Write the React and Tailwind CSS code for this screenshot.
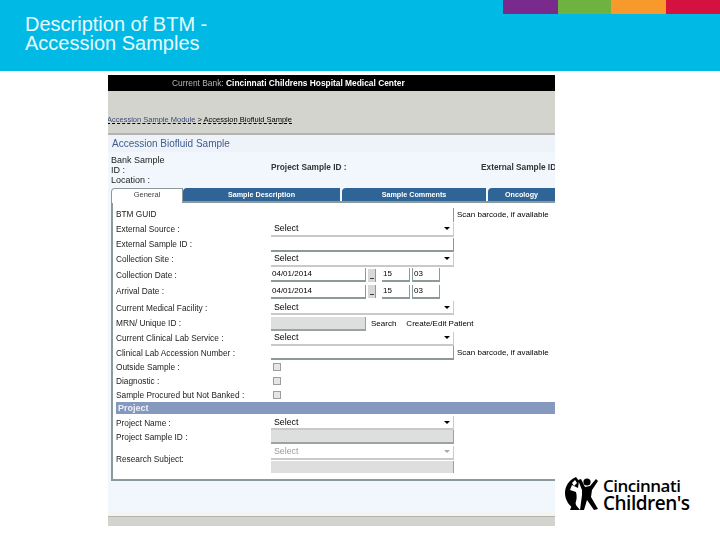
const Select = ({ disabled }) => (
  <div className={`flex h-[14px] w-[183px] items-center justify-between border-r border-b-2 border-[#c9c9c9] bg-white pl-[3px] pr-[3px] text-[8.8px] ${disabled ? "text-[#9a9a9a]" : ""}`}>
    <span>Select</span>
    <span className={`h-0 w-0 border-x-[3px] border-t-[3px] border-x-transparent ${disabled ? "border-t-[#aaaaaa]" : "border-t-black"}`} />
  </div>
);

const TextBox = ({ className = "w-[183px]", children }) => (
  <div className={`flex h-[14px] items-center border-r border-b-2 border-[#8c9a9c] bg-white pl-px text-[8px] ${className}`}>{children}</div>
);

const GreyBox = ({ className = "w-[183px]" }) => (
  <div className={`h-[14px] border-r border-b-2 border-[#9aa3a3] bg-[#dedede] ${className}`} />
);

const Check = () => <div className="ml-[2px] h-[8px] w-[8px] border border-[#9d9d9d] bg-[#e6e6e6]" />;

const Row = ({ label, h = "h-[15px]", children }) => (
  <div className={`grid grid-cols-[155px_1fr] items-center ${h}`}>
    <span className="whitespace-nowrap text-[8.3px] text-[#222222]">{label}</span>
    <div className="flex items-center">{children}</div>
  </div>
);

const DateFields = ({ date }) => (
  <>
    <TextBox className="w-[95px]">{date}</TextBox>
    <div className="ml-[2px] flex h-[13px] w-[8px] items-end justify-center overflow-hidden border-r border-[#8c9a9c] bg-[#d8d8d8] pb-[2px] text-[8px] font-bold leading-[6px] tracking-[-1px] text-black">...</div>
    <TextBox className="ml-[6px] w-[28px] pl-[1px]">15</TextBox>
    <TextBox className="ml-[2px] w-[28px] border-l">03</TextBox>
  </>
);

const Tab = ({ className, children }) => (
  <div className={`flex h-[13px] items-center justify-center rounded-tl-[4px] bg-[#2f6496] text-[7.2px] font-bold text-white ${className}`}>{children}</div>
);

const Logo = () => (
  <div className="flex items-center">
    <svg width="38" height="38" viewBox="0 0 38 38" className="shrink-0">
      <path d="M11 2 C4 5 0 11 0 18 C0 26 5 32 12 35 L15 35 L10 29 C12 25 12 21 11 17 L5 15 L7 10 L13 13 L14 6 Z" fill="#000" />
      <path d="M7 8 L10 5 L12 8 L9 11 Z" fill="#fff" />
      <circle cx="22" cy="7" r="3.6" fill="#000" />
      <path d="M13 5 L16 4 L20 12 L25 11 L31 4 L33 6 L27 15 L26 22 L33 34 L29 35 L22 25 L19 35 L15 35 L17 20 L17 15 Z" fill="#000" />
      <path d="M7 30 L10 26 L12 35 L5 35 Z" fill="#000" />
    </svg>
    <div className="font-['Open_Sans',sans-serif] font-semibold tracking-[-0.5px] text-black">
      <div className="text-[17px] leading-[17px]">Cincinnati</div>
      <div className="text-[19px] leading-[18px]">Children's</div>
    </div>
  </div>
);

export default function App() {
  return (
    <div className="relative h-[540px] w-[720px] overflow-hidden bg-white font-['Liberation_Sans',sans-serif]">
      {/* Header */}
      <div className="flex h-[71px] justify-between bg-[#00b9e4]">
        <h1 className="pl-[25px] pt-[15px] text-[20px] leading-[19px] text-[#e8fbff]">
          Description of BTM -<br />Accession Samples
        </h1>
        <div className="flex h-[14px]">
          <div className="w-[55px] bg-[#7a2a8c]" />
          <div className="w-[53px] bg-[#6fb23f]" />
          <div className="w-[55px] bg-[#f79a2b]" />
          <div className="w-[54px] bg-[#d5123f]" />
        </div>
      </div>

      {/* Screenshot of the app */}
      <div className="ml-[108px] mt-[4px] h-[451px] w-[447px] overflow-hidden bg-[#f2f7fd] text-[9px] leading-none blur-[0.35px]">
        <div className="flex h-[16px] items-center bg-black pl-[64px] text-[8.4px]">
          <span className="text-[#b5b5b5]">Current Bank:&nbsp;</span>
          <span className="font-bold text-white">Cincinnati Childrens Hospital Medical Center</span>
        </div>
        <div className="flex h-[44px] items-end border-b-2 border-[#b3b3b3] bg-[#d4d4cf]">
          <div className="mb-[9px] -ml-px border-b border-dashed border-black text-[7.5px] whitespace-nowrap">
            <span className="text-[#3b4a78]">Accession Sample Module</span> &gt; Accession Biofluid Sample
          </div>
        </div>
        <div className="flex h-[17px] items-center bg-[#eef3fa] pl-[4px] text-[10px] text-[#3f5c8c]">Accession Biofluid Sample</div>

        <div className="grid h-[36px] grid-cols-[160px_210px_1fr] pl-[3px] pt-[3px] text-[#222222]">
          <div className="leading-[10px]">Bank Sample<br />ID :<br />Location :</div>
          <div className="pt-[8px] text-[8.3px] font-bold text-[#333333]">Project Sample ID :</div>
          <div className="whitespace-nowrap pt-[8px] text-[8.3px] font-bold text-[#333333]">External Sample ID</div>
        </div>

        {/* Tabs */}
        <div className="flex h-[13px] items-start text-center">
          <div className="relative z-10 ml-[3px] flex h-[15px] w-[72px] items-center justify-center rounded-tl-[4px] border-x border-t border-[#8c9a9c] bg-white pb-[2px] text-[7.5px] text-[#444444]">General</div>
          <Tab className="w-[157px]">Sample Description</Tab>
          <Tab className="ml-[2px] w-[144px]">Sample Comments</Tab>
          <Tab className="ml-[2px] w-[67px]">Oncology</Tab>
        </div>

        {/* Form */}
        <div className="ml-[3px] h-[280px] border-t-2 border-b-2 border-l-2 border-[#8c9a9c] bg-white pt-[4px] pl-[3px]">
          <Row label="BTM GUID">
            <div className="h-[14px] w-[183px] border-r border-[#8c9a9c]" />
            <span className="ml-[3px] whitespace-nowrap text-[8px]">Scan barcode, if available</span>
          </Row>
          <Row label="External Source :"><Select /></Row>
          <Row label="External Sample ID :"><TextBox /></Row>
          <Row label="Collection Site :"><Select /></Row>
          <Row label="Collection Date :" h="h-[16px]"><DateFields date="04/01/2014" /></Row>
          <Row label="Arrival Date :" h="h-[17px]"><DateFields date="04/01/2014" /></Row>
          <Row label="Current Medical Facility :" h="h-[16px]"><Select /></Row>
          <Row label="MRN/ Unique ID :">
            <GreyBox className="w-[95px]" />
            <span className="ml-[5px] whitespace-nowrap text-[8px]">Search</span>
            <span className="ml-[10px] whitespace-nowrap text-[8px]">Create/Edit Patient</span>
          </Row>
          <Row label="Current Clinical Lab Service :"><Select /></Row>
          <Row label="Clinical Lab Accession Number :" h="h-[14px]">
            <TextBox />
            <span className="ml-[3px] whitespace-nowrap text-[8px]">Scan barcode, if available</span>
          </Row>
          <Row label="Outside Sample :" h="h-[14px]"><Check /></Row>
          <Row label="Diagnostic :" h="h-[14px]"><Check /></Row>
          <Row label="Sample Procured but Not Banked :" h="h-[14px]"><Check /></Row>
          <div className="flex h-[12px] items-center bg-[#8598bd] pl-[2px] font-bold text-[#eef1f7]">Project</div>
          <div className="pt-[2px]">
            <Row label="Project Name :" h="h-[14px]"><Select /></Row>
            <Row label="Project Sample ID :" h="h-[14px]"><GreyBox /></Row>
            <div className="mt-px grid h-[28px] grid-cols-[155px_1fr] items-center">
              <span className="text-[8.3px] text-[#222222]">Research Subject:</span>
              <div className="flex flex-col gap-px">
                <Select disabled />
                <div className="h-[12px] w-[183px] border-r border-[#9aa3a3] bg-[#dedede]" />
              </div>
            </div>
          </div>
        </div>

        <div className="h-[31px]" />
        <div className="h-[4px] bg-[#f4f4f2]" />
        <div className="h-[10px] border-t border-[#b3b3b3] bg-[#d4d4cf]" />
      </div>

      {/* Logo sits over the bottom right corner of the slide */}
      <div className="absolute left-[565px] top-[475px]">
        <Logo />
      </div>
    </div>
  );
}
